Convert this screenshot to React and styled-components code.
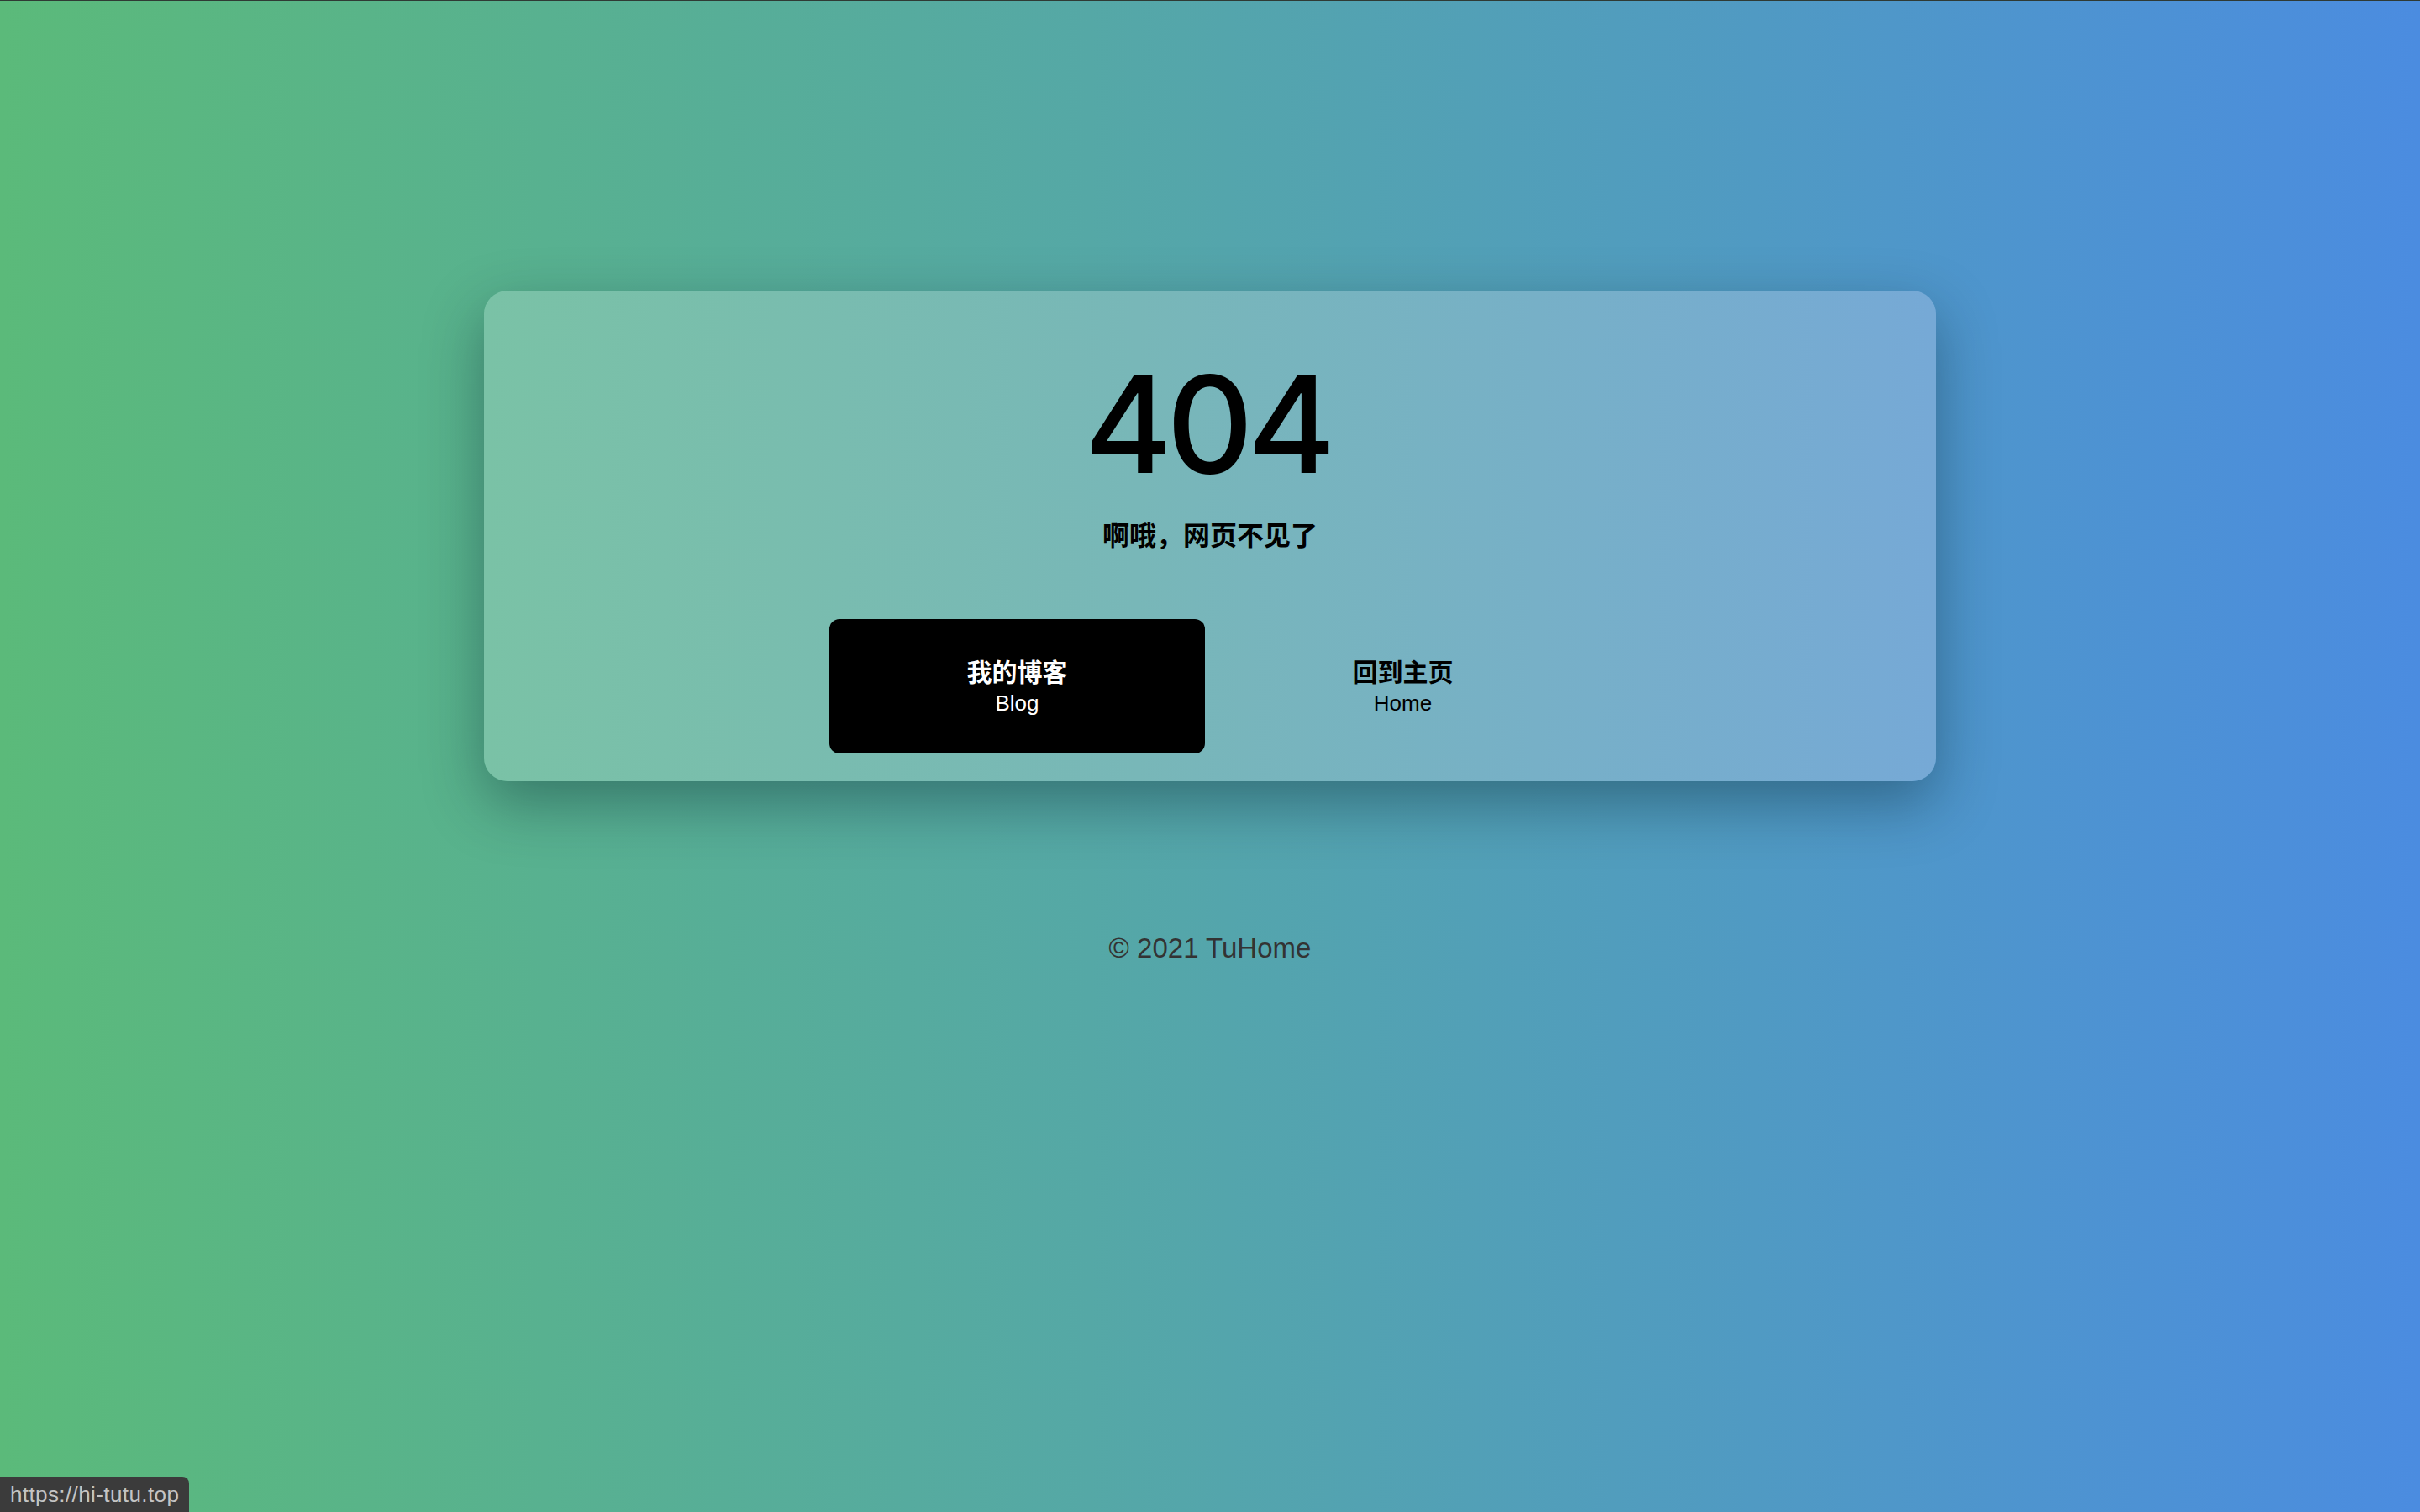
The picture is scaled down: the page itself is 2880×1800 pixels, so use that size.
import React from "react";
import styled, { createGlobalStyle } from "styled-components";

const GlobalStyle = createGlobalStyle`
  html, body {
    margin: 0;
    padding: 0;
  }
  body {
    font-family: "Liberation Sans", "Noto Sans CJK SC", Arial, sans-serif;
  }
  * { box-sizing: border-box; }
`;

const Page = styled.div`
  min-height: 100vh;
  border-top: 1px solid #2f3a34;
  background: linear-gradient(to right, #5bba7a 0%, #55a8a6 45%, #4b8ce0 100%);
  display: flex;
  flex-direction: column;
  align-items: center;
  padding-top: 345px;
`;

const Card = styled.section`
  width: 1728px;
  height: 584px;
  border-radius: 28px;
  background: linear-gradient(to right, #7ac2a6 0%, #78b7b8 45%, #76a9d6 100%);
  box-shadow: 0 26px 70px rgba(0, 30, 40, 0.38);
  display: flex;
  flex-direction: column;
  align-items: center;
  padding-top: 78px;
`;

const Code = styled.h1`
  margin: 0 0 0 -7px;
  font-family: "Inter", "Liberation Sans", sans-serif;
  font-weight: 500;
  font-size: 160px;
  line-height: 162px;
  color: #000;
  letter-spacing: -7px;
`;

const Subtitle = styled.p`
  margin: 36px 0 0;
  font-family: "Liberation Sans", "Noto Sans CJK SC", sans-serif;
  font-weight: 700;
  font-size: 32px;
  line-height: 32px;
  color: #000;
`;

const Actions = styled.div`
  display: flex;
  gap: 12px;
  margin-top: 83px;
`;

const ActionButton = styled.a`
  width: 447px;
  height: 160px;
  border-radius: 12px;
  display: flex;
  flex-direction: column;
  align-items: center;
  justify-content: center;
  text-decoration: none;
  background: ${(p) => (p.$primary ? "#000" : "transparent")};
  color: ${(p) => (p.$primary ? "#fff" : "#000")};
  padding-top: 2px;
`;

const Label = styled.span`
  font-family: "Liberation Sans", "Noto Sans CJK SC", sans-serif;
  font-weight: 700;
  font-size: 30px;
  line-height: 36px;
`;

const Sub = styled.span`
  font-family: "Liberation Sans", sans-serif;
  font-size: 26px;
  line-height: 31px;
  margin-top: 3px;
`;

const Footer = styled.footer`
  margin-top: 183px;
  font-family: "Liberation Sans", sans-serif;
  font-size: 33px;
  line-height: 32px;
  color: #333;
`;

const StatusBar = styled.div`
  position: fixed;
  left: 0;
  bottom: 0;
  height: 42px;
  padding: 0 12px 0 12px;
  display: flex;
  align-items: center;
  background: #3b3b3b;
  border-top-right-radius: 8px;
  color: #c4c4c4;
  font-family: "Liberation Sans", sans-serif;
  font-size: 26px;
  letter-spacing: 0.4px;
`;

export default function App() {
  return (
    <>
      <GlobalStyle />
      <Page>
        <Card>
          <Code>404</Code>
          <Subtitle>啊哦，网页不见了</Subtitle>
          <Actions>
            <ActionButton $primary href="#">
              <Label>我的博客</Label>
              <Sub>Blog</Sub>
            </ActionButton>
            <ActionButton href="#">
              <Label>回到主页</Label>
              <Sub>Home</Sub>
            </ActionButton>
          </Actions>
        </Card>
        <Footer>© 2021 TuHome</Footer>
      </Page>
      <StatusBar>https://hi-tutu.top</StatusBar>
    </>
  );
}
